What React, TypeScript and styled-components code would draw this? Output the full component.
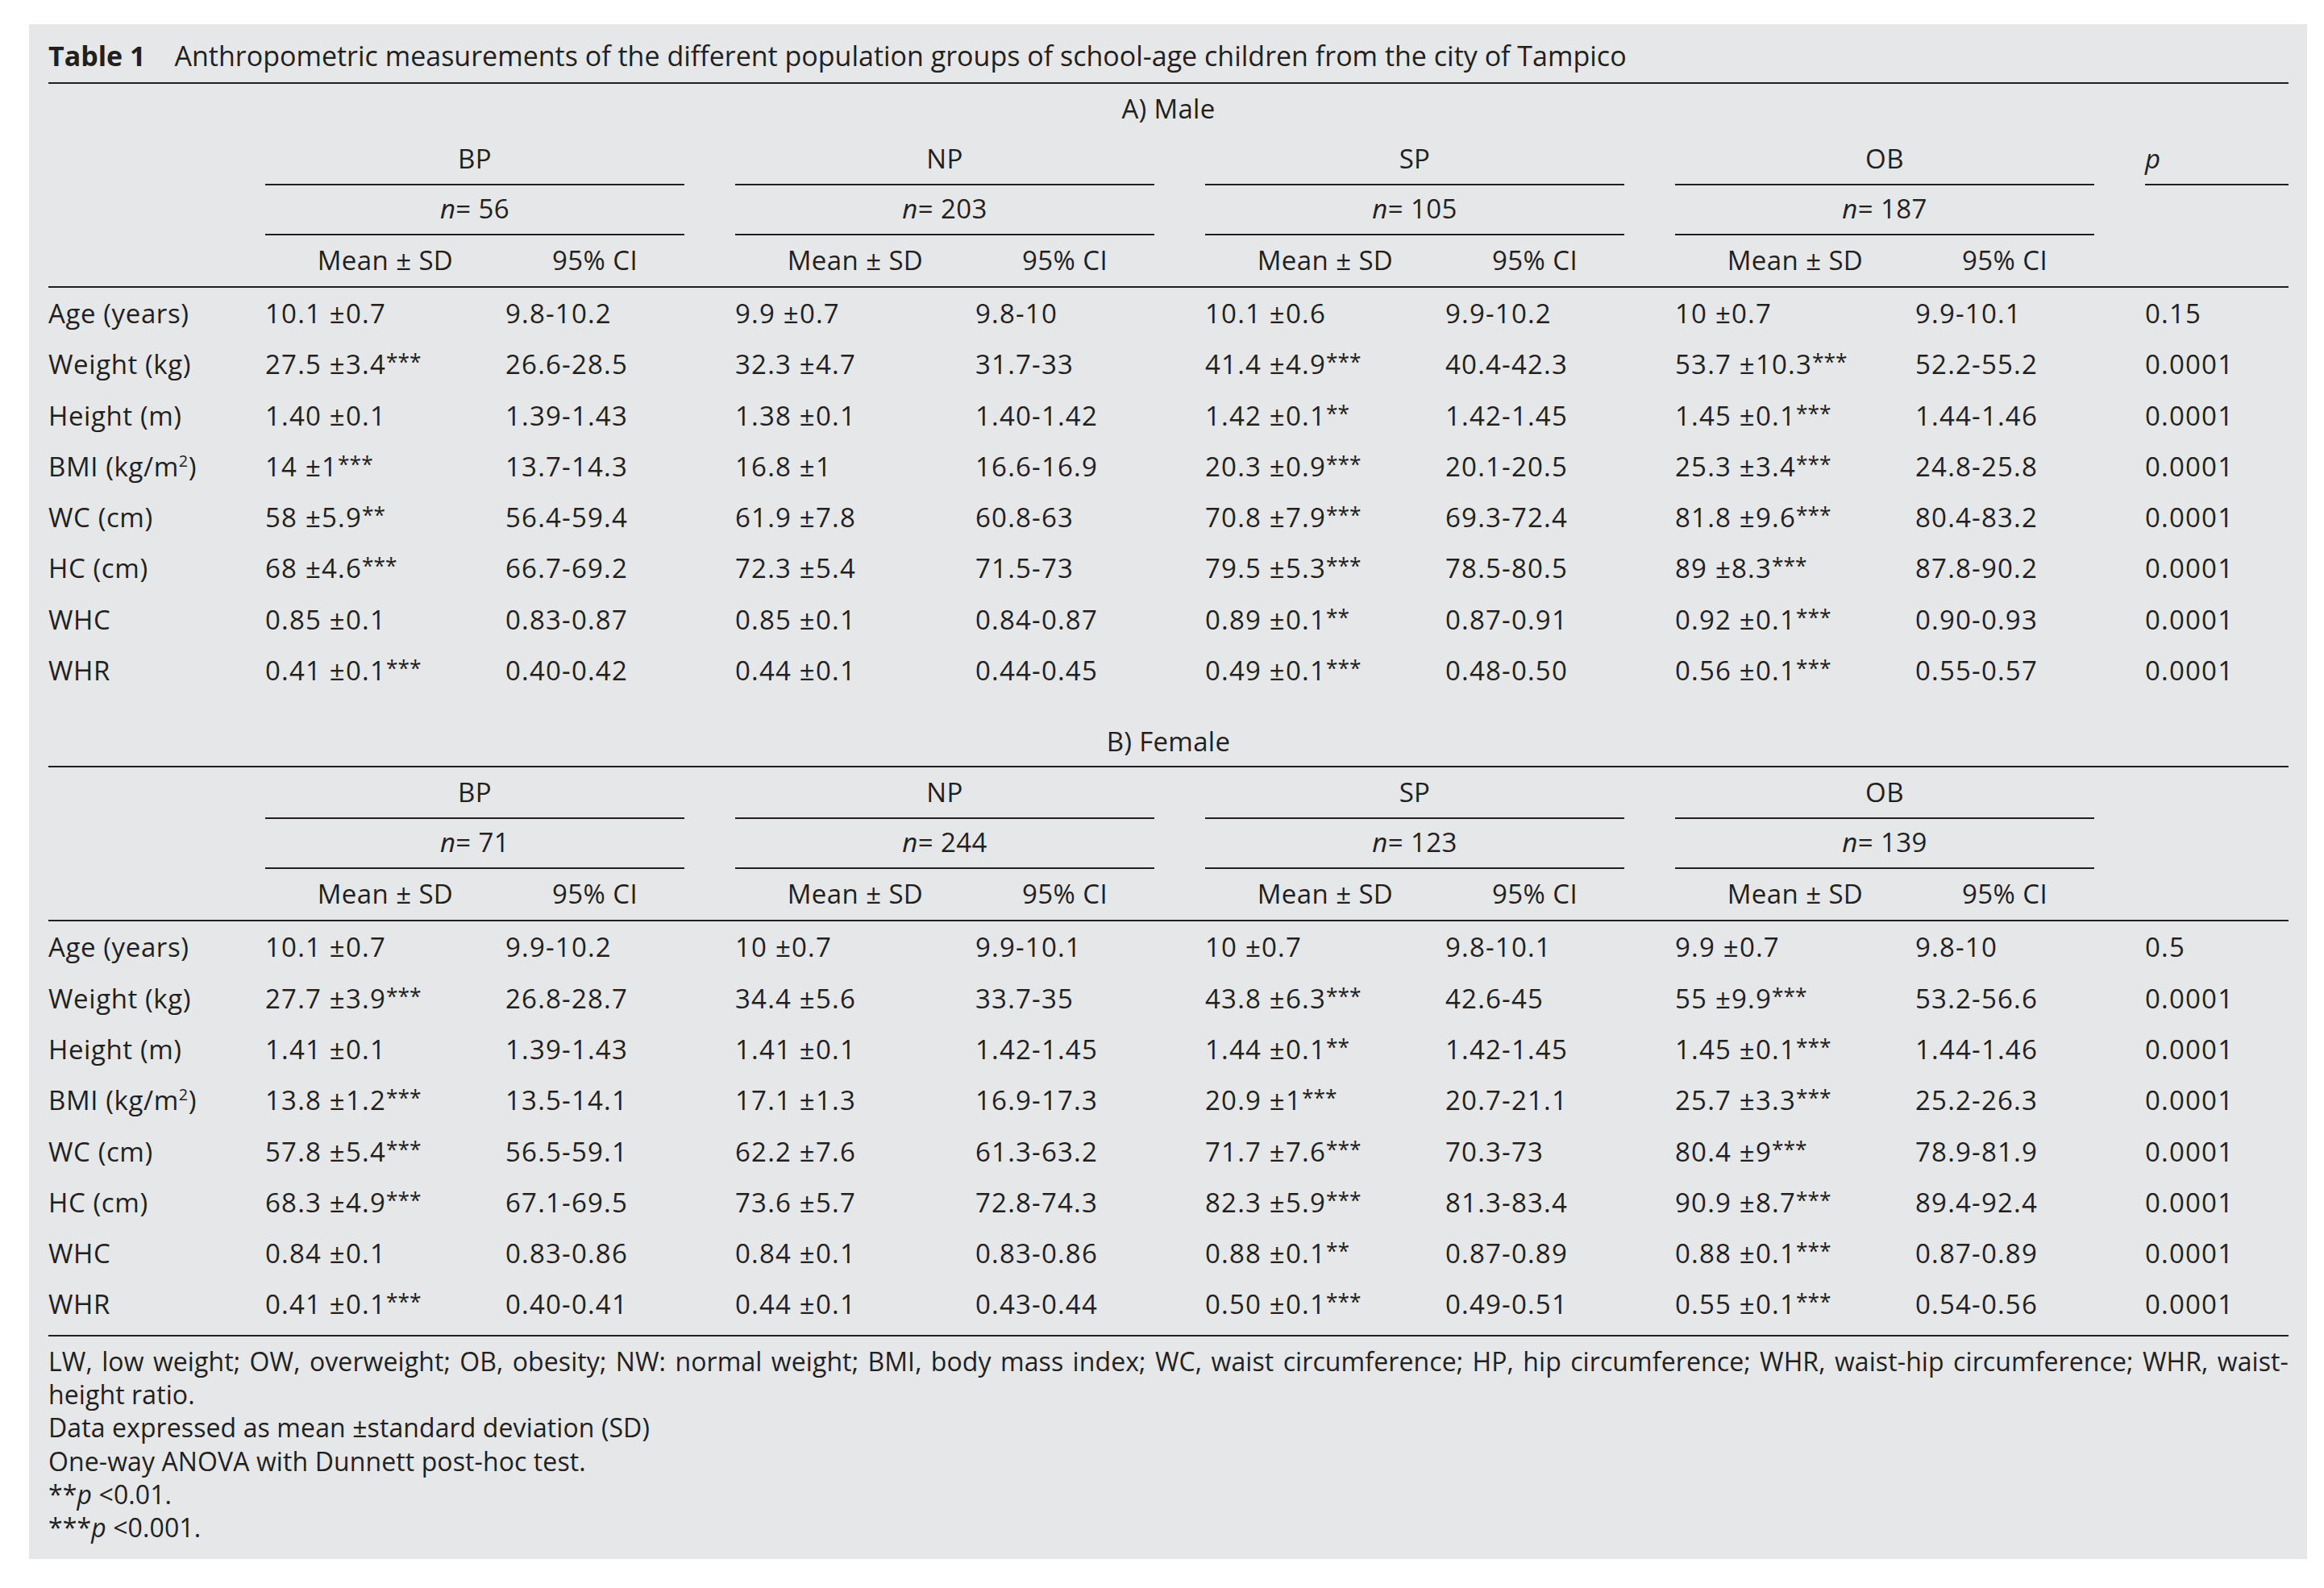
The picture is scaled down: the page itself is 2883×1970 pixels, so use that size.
import React from 'react';
import styled, { createGlobalStyle } from 'styled-components';

const INK = '#231f20';

const GlobalStyle = createGlobalStyle`
  html, body { margin: 0; padding: 0; background: #ffffff; }
  body {
    font-family: "Open Sans", "Noto Sans", "DejaVu Sans", sans-serif;
    color: ${INK};
  }
`;

const Page = styled.div`
  padding: 30px 21px 41px 36px;
`;

const Panel = styled.section`
  background: #e6e7e9;
  padding: 0 23px 18px 24px;
  font-size: 33px;
`;

const Caption = styled.div`
  display: flex;
  align-items: baseline;
  height: 72px;
  line-height: 78px;
  font-size: 34px;
  border-bottom: 2px solid ${INK};
  white-space: nowrap;
`;

const CaptionLabel = styled.span`
  font-weight: 700;
  margin-right: 36px;
`;

const SectionTitle = styled.div<{ $ruled?: boolean; $spaced?: boolean }>`
  text-align: center;
  height: ${(p) => (p.$ruled ? '60px' : '62px')};
  line-height: ${(p) => (p.$ruled ? '60px' : '62px')};
  margin-top: ${(p) => (p.$spaced ? '27px' : '0')};
  border-bottom: ${(p) => (p.$ruled ? `2px solid ${INK}` : 'none')};
  letter-spacing: 0.3px;
`;

const Row = styled.div<{ $h: number; $ruled?: boolean }>`
  display: grid;
  grid-template-columns: 206px repeat(4, 520px) 1fr;
  column-gap: 63px;
  height: ${(p) => p.$h}px;
  line-height: ${(p) => p.$h}px;
  border-bottom: ${(p) => (p.$ruled ? `2px solid ${INK}` : 'none')};
  white-space: nowrap;
`;

const Label = styled.div`
  letter-spacing: 0.6px;
`;

const GroupHead = styled.div<{ $line?: boolean }>`
  text-align: center;
  border-bottom: ${(p) => (p.$line ? `2px solid ${INK}` : '2px solid transparent')};
  letter-spacing: 0.4px;
`;

const PHead = styled.div<{ $line?: boolean }>`
  font-style: italic;
  border-bottom: ${(p) => (p.$line ? `2px solid ${INK}` : '2px solid transparent')};
`;

const Pair = styled.div`
  display: grid;
  grid-template-columns: 298px 1fr;
`;

const SubHead = styled.div`
  text-align: center;
  letter-spacing: 0.4px;
`;

const Value = styled.div`
  letter-spacing: 1.2px;
`;

const Stars = styled.span`
  font-size: 0.8em;
  line-height: 0;
  vertical-align: 0.18em;
  letter-spacing: 0;
`;

const Ital = styled.span`
  font-style: italic;
`;

const Sup = styled.sup`
  font-size: 0.6em;
  line-height: 0;
`;

const BottomRule = styled.div`
  margin-top: 6px;
  border-bottom: 2px solid ${INK};
`;

const Notes = styled.div`
  padding-top: 10px;
  font-size: 32px;
  line-height: 41.3px;
  letter-spacing: 0.1px;
`;

const JustifiedLine = styled.div`
  text-align: justify;
  text-align-last: justify;
  white-space: nowrap;
`;

const NoteLine = styled.div``;

type Cell = [string, string, string, string];
type DataRow = { label: React.ReactNode; cells: Cell[]; p: string };
type Section = {
  title: string;
  ns: string[];
  showP: boolean;
  rows: DataRow[];
};

const bmi = (
  <>
    BMI (kg/m<Sup>2</Sup>)
  </>
);

const sections: Section[] = [
  {
    title: 'A) Male',
    ns: ['56', '203', '105', '187'],
    showP: true,
    rows: [
      { label: 'Age (years)', cells: [['10.1', '0.7', '', '9.8-10.2'], ['9.9', '0.7', '', '9.8-10'], ['10.1', '0.6', '', '9.9-10.2'], ['10', '0.7', '', '9.9-10.1']], p: '0.15' },
      { label: 'Weight (kg)', cells: [['27.5', '3.4', '***', '26.6-28.5'], ['32.3', '4.7', '', '31.7-33'], ['41.4', '4.9', '***', '40.4-42.3'], ['53.7', '10.3', '***', '52.2-55.2']], p: '0.0001' },
      { label: 'Height (m)', cells: [['1.40', '0.1', '', '1.39-1.43'], ['1.38', '0.1', '', '1.40-1.42'], ['1.42', '0.1', '**', '1.42-1.45'], ['1.45', '0.1', '***', '1.44-1.46']], p: '0.0001' },
      { label: bmi, cells: [['14', '1', '***', '13.7-14.3'], ['16.8', '1', '', '16.6-16.9'], ['20.3', '0.9', '***', '20.1-20.5'], ['25.3', '3.4', '***', '24.8-25.8']], p: '0.0001' },
      { label: 'WC (cm)', cells: [['58', '5.9', '**', '56.4-59.4'], ['61.9', '7.8', '', '60.8-63'], ['70.8', '7.9', '***', '69.3-72.4'], ['81.8', '9.6', '***', '80.4-83.2']], p: '0.0001' },
      { label: 'HC (cm)', cells: [['68', '4.6', '***', '66.7-69.2'], ['72.3', '5.4', '', '71.5-73'], ['79.5', '5.3', '***', '78.5-80.5'], ['89', '8.3', '***', '87.8-90.2']], p: '0.0001' },
      { label: 'WHC', cells: [['0.85', '0.1', '', '0.83-0.87'], ['0.85', '0.1', '', '0.84-0.87'], ['0.89', '0.1', '**', '0.87-0.91'], ['0.92', '0.1', '***', '0.90-0.93']], p: '0.0001' },
      { label: 'WHR', cells: [['0.41', '0.1', '***', '0.40-0.42'], ['0.44', '0.1', '', '0.44-0.45'], ['0.49', '0.1', '***', '0.48-0.50'], ['0.56', '0.1', '***', '0.55-0.57']], p: '0.0001' },
    ],
  },
  {
    title: 'B) Female',
    ns: ['71', '244', '123', '139'],
    showP: false,
    rows: [
      { label: 'Age (years)', cells: [['10.1', '0.7', '', '9.9-10.2'], ['10', '0.7', '', '9.9-10.1'], ['10', '0.7', '', '9.8-10.1'], ['9.9', '0.7', '', '9.8-10']], p: '0.5' },
      { label: 'Weight (kg)', cells: [['27.7', '3.9', '***', '26.8-28.7'], ['34.4', '5.6', '', '33.7-35'], ['43.8', '6.3', '***', '42.6-45'], ['55', '9.9', '***', '53.2-56.6']], p: '0.0001' },
      { label: 'Height (m)', cells: [['1.41', '0.1', '', '1.39-1.43'], ['1.41', '0.1', '', '1.42-1.45'], ['1.44', '0.1', '**', '1.42-1.45'], ['1.45', '0.1', '***', '1.44-1.46']], p: '0.0001' },
      { label: bmi, cells: [['13.8', '1.2', '***', '13.5-14.1'], ['17.1', '1.3', '', '16.9-17.3'], ['20.9', '1', '***', '20.7-21.1'], ['25.7', '3.3', '***', '25.2-26.3']], p: '0.0001' },
      { label: 'WC (cm)', cells: [['57.8', '5.4', '***', '56.5-59.1'], ['62.2', '7.6', '', '61.3-63.2'], ['71.7', '7.6', '***', '70.3-73'], ['80.4', '9', '***', '78.9-81.9']], p: '0.0001' },
      { label: 'HC (cm)', cells: [['68.3', '4.9', '***', '67.1-69.5'], ['73.6', '5.7', '', '72.8-74.3'], ['82.3', '5.9', '***', '81.3-83.4'], ['90.9', '8.7', '***', '89.4-92.4']], p: '0.0001' },
      { label: 'WHC', cells: [['0.84', '0.1', '', '0.83-0.86'], ['0.84', '0.1', '', '0.83-0.86'], ['0.88', '0.1', '**', '0.87-0.89'], ['0.88', '0.1', '***', '0.87-0.89']], p: '0.0001' },
      { label: 'WHR', cells: [['0.41', '0.1', '***', '0.40-0.41'], ['0.44', '0.1', '', '0.43-0.44'], ['0.50', '0.1', '***', '0.49-0.51'], ['0.55', '0.1', '***', '0.54-0.56']], p: '0.0001' },
    ],
  },
];

const GROUPS = ['BP', 'NP', 'SP', 'OB'];

function TableSection({ s, index }: { s: Section; index: number }) {
  const female = index > 0;
  return (
    <>
      <SectionTitle $ruled={female} $spaced={female}>
        {s.title}
      </SectionTitle>
      <Row $h={62}>
        <Label />
        {GROUPS.map((g) => (
          <GroupHead key={g} $line>
            {g}
          </GroupHead>
        ))}
        <PHead $line={s.showP}>{s.showP ? 'p' : ''}</PHead>
      </Row>
      <Row $h={62}>
        <Label />
        {s.ns.map((n, i) => (
          <GroupHead key={i} $line>
            <Ital>n</Ital>= {n}
          </GroupHead>
        ))}
        <Label />
      </Row>
      <Row $h={65} $ruled>
        <Label />
        {GROUPS.map((g) => (
          <Pair key={g}>
            <SubHead>Mean {'\u00b1'} SD</SubHead>
            <SubHead>95% CI</SubHead>
          </Pair>
        ))}
        <Label />
      </Row>
      {s.rows.map((r, ri) => (
        <Row $h={63.3} key={ri}>
          <Label>{r.label}</Label>
          {r.cells.map((c, ci) => (
            <Pair key={ci}>
              <Value>
                {c[0]} {'\u00b1'}{c[1]}
                {c[2] && <Stars>{c[2]}</Stars>}
              </Value>
              <Value>{c[3]}</Value>
            </Pair>
          ))}
          <Value>{r.p}</Value>
        </Row>
      ))}
    </>
  );
}

export default function App() {
  return (
    <>
      <GlobalStyle />
      <Page>
        <Panel>
          <Caption>
            <CaptionLabel>Table 1</CaptionLabel>
            <span>
              Anthropometric measurements of the different population groups of school-age children from the city of
              Tampico
            </span>
          </Caption>
          {sections.map((s, i) => (
            <TableSection s={s} index={i} key={s.title} />
          ))}
          <BottomRule />
          <Notes>
            <JustifiedLine>
              LW, low weight; OW, overweight; OB, obesity; NW: normal weight; BMI, body mass index; WC, waist
              circumference; HP, hip circumference; WHR, waist-hip circumference; WHR, waist-
            </JustifiedLine>
            <NoteLine>height ratio.</NoteLine>
            <NoteLine>Data expressed as mean {'\u00b1'}standard deviation (SD)</NoteLine>
            <NoteLine>One-way ANOVA with Dunnett post-hoc test.</NoteLine>
            <NoteLine>
              **<Ital>p</Ital> {'<'}0.01.
            </NoteLine>
            <NoteLine>
              ***<Ital>p</Ital> {'<'}0.001.
            </NoteLine>
          </Notes>
        </Panel>
      </Page>
    </>
  );
}
